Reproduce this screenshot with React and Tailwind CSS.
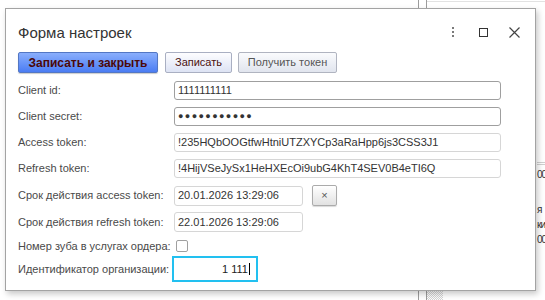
import React from 'react';

const font = "font-['Liberation_Sans',Arial,sans-serif]";

const Row = ({ label, className = '', children }) => (
  <div className={`flex items-center ${className}`}>
    <div className="w-[156px] shrink-0 text-[11px] leading-none text-[#4a4a4a] whitespace-nowrap">{label}</div>
    {children}
  </div>
);

const TextBox = ({ value, width = 'w-[327px]', readOnly = false }) => (
  <div
    className={`${width} h-[19px] flex items-center pl-[3px] rounded-[3px] border bg-white text-[11px] text-[#333] whitespace-nowrap overflow-hidden ${readOnly ? 'border-[#d6d6d6]' : 'border-[#9f9f9f]'}`}
  >
    {value}
  </div>
);

const App = () => {
  return (
    <div className={`relative w-[545px] h-[300px] overflow-hidden bg-white ${font}`}>
      {/* то, что лежит под окном */}
      <div className="absolute left-[418px] top-0 h-full w-[1px] bg-[#9c9c9c]" />
      <div className="absolute left-[426px] top-0 h-full w-[1px] bg-[#9c9c9c]" />
      <div className="absolute left-[427px] top-[1px] right-0 h-[1px] bg-[#e2e2e2]" />
      <div className="absolute left-[427px] top-[291px] w-[16px] h-[9px] bg-[repeating-conic-gradient(#d4d4d4_0_25%,#ffffff_0_50%)] bg-[length:2px_2px]" />
      <div className="absolute left-[537px] top-[162px] w-[10px] h-[3px] border-y border-[#d0d0d0]" />
      <div className="absolute left-[537px] top-[168px] text-[10px] leading-[14px] tracking-[-1px] text-[#333]">00</div>
      <div className="absolute left-[537px] top-[202px] text-[10px] leading-[15px] tracking-[-1px] text-[#333]">
        <div>я</div>
        <div>ки</div>
        <div>00</div>
      </div>

      {/* окно формы */}
      <div className="absolute left-[5px] top-[8px] z-10 w-[531px] h-[283px] bg-white border border-[#a3a3a3] shadow-[2px_3px_6px_rgba(0,0,0,0.22)] pl-[12px] pr-[14px]">
        <div className="flex items-center h-[20px] mt-[13px]">
          <div className="text-[15px] text-[#333] leading-none">Форма настроек</div>
          <div className="ml-auto flex items-center">
            <div className="flex flex-col gap-[2.3px] mr-[25px]">
              <span className="w-[2px] h-[2px] bg-[#7a7a7a]" />
              <span className="w-[2px] h-[2px] bg-[#7a7a7a]" />
              <span className="w-[2px] h-[2px] bg-[#7a7a7a]" />
            </div>
            <div className="w-[9px] h-[9px] border-[1.5px] border-[#333] mr-[21px]" />
            <svg width="11" height="11" viewBox="0 0 11 11" className="mr-[1px]">
              <path d="M0.5 0.5 L10.5 10.5 M10.5 0.5 L0.5 10.5" stroke="#444" strokeWidth="1.2" />
            </svg>
          </div>
        </div>

        <div className="flex items-center mt-[10px] h-[21px] gap-[7px]">
          <button className="w-[140px] h-[21px] rounded-[2px] border border-[#5377c4] bg-gradient-to-b from-[#8aaefc] to-[#4b7cf3] text-[12px] font-bold text-[#4b0808] shadow-[0_1px_1px_rgba(0,0,0,0.2)]">
            Записать и закрыть
          </button>
          <button className="w-[67px] h-[21px] rounded-[2px] border border-[#a9afc2] bg-gradient-to-b from-[#fdfdff] to-[#dde3f4] text-[11px] text-[#4a1010]">
            Записать
          </button>
          <button className="ml-[-1px] w-[99px] h-[21px] rounded-[2px] border border-[#b0b4c0] bg-gradient-to-b from-[#fafbfd] to-[#e1e5ee] text-[11px] text-[#555]">
            Получить токен
          </button>
        </div>

        <div className="flex flex-col mt-[8px]">
          <Row label="Client id:">
            <TextBox value="1111111111" />
          </Row>
          <Row label="Client secret:" className="mt-[7px]">
            <TextBox value={<span className="text-[9px] tracking-[1.4px] text-[#333]">●●●●●●●●●●●</span>} />
          </Row>
          <Row label="Access token:" className="mt-[7px]">
            <TextBox value="!235HQbOOGtfwHtniUTZXYCp3aRaHpp6js3CSS3J1" readOnly />
          </Row>
          <Row label="Refresh token:" className="mt-[7px]">
            <TextBox value="!4HijVSeJySx1HeHXEcOi9ubG4KhT4SEV0B4eTI6Q" readOnly />
          </Row>
          <Row label="Срок действия access token:" className="mt-[7px] h-[21px]">
            <TextBox value="20.01.2026 13:29:06" width="w-[129px] !h-[20px]" readOnly />
            <button className="ml-[9px] w-[25px] h-[21px] rounded-[2px] border border-[#ababab] bg-gradient-to-b from-[#ffffff] to-[#e2e2e2] shadow-[0_1px_1px_rgba(0,0,0,0.15)] text-[11px] leading-none text-[#555]">
              ×
            </button>
          </Row>
          <Row label="Срок действия refresh token:" className="mt-[6px]">
            <TextBox value="22.01.2026 13:29:06" width="w-[129px] !h-[20px]" readOnly />
          </Row>
          <Row label="Номер зуба в услугах ордера:" className="mt-[8px] h-[12px]">
            <div className="ml-[2px] w-[12px] h-[12px] rounded-[2px] border border-[#a0a0a0] bg-white" />
          </Row>
          <Row label="Идентификатор организации:" className="mt-[4px]">
            <div className="-ml-[2px] w-[86px] h-[26px] border-2 border-[#22c0f0] flex items-center justify-end pr-[6px] text-[11px] text-[#222]">
              <span>1 111</span>
              <span className="w-[1px] h-[12px] bg-black ml-[1px]" />
            </div>
          </Row>
        </div>
      </div>
    </div>
  );
};

export default App;
